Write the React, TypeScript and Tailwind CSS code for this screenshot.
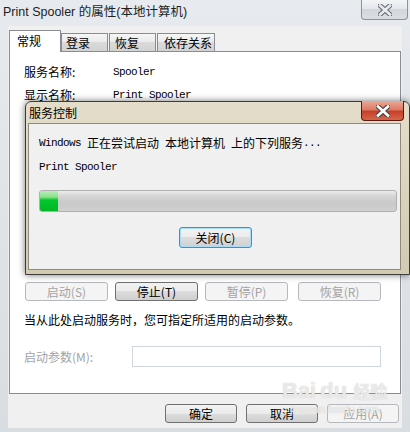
import React from "react";

const MONO = "font-['Liberation_Mono',monospace] text-[11px] tracking-[-0.6px]";

function M({ children }: { children: React.ReactNode }) {
  return <span className={MONO}>{children}</span>;
}

function CloseX({ fill, outline }: { fill: string; outline: string }) {
  return (
    <svg width="14" height="12" viewBox="0 0 14 12">
      <path d="M2 1.5 L12 10.5 M12 1.5 L2 10.5" stroke={outline} strokeWidth="5" strokeLinecap="square" fill="none" />
      <path d="M2 1.5 L12 10.5 M12 1.5 L2 10.5" stroke={fill} strokeWidth="2.6" strokeLinecap="square" fill="none" />
    </svg>
  );
}

function Btn({
  children,
  disabled,
  className = "",
}: {
  children: React.ReactNode;
  disabled?: boolean;
  className?: string;
}) {
  return (
    <div
      className={
        "flex items-center justify-center rounded-[3px] border text-[12px] leading-none " +
        (disabled
          ? "border-[#b5b9bd] bg-[#f4f4f4] text-[#a3a3a3] "
          : "border-[#707070] bg-[linear-gradient(#f2f2f2,#ebebeb_50%,#dddddd_50%,#cfcfcf)] text-black ") +
        className
      }
    >
      {children}
    </div>
  );
}

export default function App() {
  return (
    <div className="relative w-[410px] h-[432px] overflow-hidden bg-gradient-to-b from-[#e7eaee] to-[#d8dde2] font-['Noto_Sans_CJK_SC',sans-serif] text-[12px] text-black">
      {/* outer title bar */}
      <div className="flex h-[26px] items-start">
        <div className="pl-[3px] pt-[3px] text-[12.5px] leading-[18px] font-['Liberation_Sans','Noto_Sans_CJK_SC',sans-serif] text-[#1e1e1e]">
          Print Spooler 的属性(本地计算机)
        </div>
        <div className="ml-auto mr-[2px] flex h-[20px] w-[47px] items-center justify-center rounded-b-[4px] border border-t-0 border-[#8d939a] bg-[linear-gradient(#f3f5f7,#e2e6ea_50%,#d2d7dc_50%,#d9dee3)]">
          <CloseX fill="#e9ebee" outline="#6f757c" />
        </div>
      </div>

      {/* client area */}
      <div className="ml-[8px] mr-[8px] h-[402px] bg-[#f0f0f0]">
        {/* tabs */}
        <div className="flex h-[25px] items-end pl-[1px]">
          <div className="relative z-10 -mb-[1px] flex h-[22px] w-[52px] items-start border border-b-0 border-[#898c95] bg-white pl-[7px] pt-[1px] text-[12px] leading-[18px]">
            常规
          </div>
          <div className="flex h-[18px] w-[47px] items-center border border-b-0 border-[#898c95] bg-[linear-gradient(#f6f6f6,#e9e9e9_50%,#dadada_50%,#d2d2d2)] pl-[4px] text-[12px]">
            登录
          </div>
          <div className="ml-[1px] flex h-[18px] w-[47px] items-center border border-b-0 border-[#898c95] bg-[linear-gradient(#f6f6f6,#e9e9e9_50%,#dadada_50%,#d2d2d2)] pl-[5px] text-[12px]">
            恢复
          </div>
          <div className="ml-[1px] flex h-[18px] w-[58px] items-center border border-b-0 border-[#898c95] bg-[linear-gradient(#f6f6f6,#e9e9e9_50%,#dadada_50%,#d2d2d2)] pl-[6px] text-[12px]">
            依存关系
          </div>
        </div>

        {/* panel */}
        <div className="ml-[1px] flex h-[343px] w-[392px] flex-col border border-[#898c95] bg-white pl-[14px] pt-[12px]">
          <div className="flex h-[16px] items-center">
            <span className="w-[89px]">服务名称:</span>
            <M>Spooler</M>
          </div>
          <div className="mt-[7px] flex h-[16px] items-center">
            <span className="w-[89px]">显示名称:</span>
            <M>Print Spooler</M>
          </div>

          {/* area hidden under the service control dialog */}
          <div className="h-[179px]" />

          <div className="flex h-[19px] pl-[1px]">
            <Btn disabled className="w-[83px]">启动(S)</Btn>
            <Btn className="ml-[7px] w-[83px]">停止(T)</Btn>
            <Btn disabled className="ml-[7px] w-[83px]">暂停(P)</Btn>
            <Btn disabled className="ml-[10px] w-[83px]">恢复(R)</Btn>
          </div>

          <div className="mt-[11px] flex h-[16px] items-center">当从此处启动服务时，您可指定所适用的启动参数。</div>

          <div className="mt-[18px] flex h-[21px] items-center">
            <span className="w-[108px] text-[#a3a3a3]">启动参数(M):</span>
            <div className="h-[21px] w-[249px] border border-[#cfd6e0] bg-white" />
          </div>
        </div>

        {/* bottom buttons */}
        <div className="mt-[10px] flex h-[19px] pl-[157px]">
          <Btn className="w-[72px]">确定</Btn>
          <Btn className="ml-[9px] w-[72px]">取消</Btn>
          <Btn disabled className="ml-[9px] w-[72px]">应用(A)</Btn>
        </div>
      </div>

      {/* service control dialog (overlay) */}
      <div className="absolute left-[25px] top-[101px] flex h-[174px] w-[385px] flex-col rounded-t-[6px] border border-[#3c3c3c] bg-gradient-to-b from-[#e4ddc9] to-[#d2cbb2] shadow-[0_0_7px_rgba(0,0,0,0.55)]">
        <div className="flex h-[21px] items-center pl-[3px] text-[12px] leading-none text-black">服务控制</div>
        <div className="absolute right-[5px] top-[-1px] flex h-[20px] w-[43px] items-center justify-center rounded-b-[4px] border border-t-0 border-[#5b1a10] bg-[linear-gradient(#eba898,#dc7b66_45%,#c8402a_55%,#d4654b)]">
          <CloseX fill="#ffffff" outline="#4a4a4a" />
        </div>
        <div className="mb-[4px] ml-[2px] mr-[8px] flex flex-1 flex-col border border-[#8e8a7c] bg-[#f0f0f0] pl-[10px]">
          <div className="mt-[11px] flex h-[16px] items-center">
            <M>Windows</M>
            <span className="ml-[6px]">正在尝试启动</span>
            <span className="ml-[6px]">本地计算机</span>
            <span className="ml-[6px]">上的下列服务</span>
            <M>...</M>
          </div>
          <div className="mt-[8px] flex h-[16px] items-center">
            <M>Print Spooler</M>
          </div>
          <div className="mt-[15px] h-[22px] w-[358px] overflow-hidden rounded-[3px] border border-[#b0b0b0] bg-[linear-gradient(#ececec,#d6d6d6_25%,#c9c9c9_60%,#d0d0d0)]">
            <div className="h-full w-[18px] bg-[linear-gradient(#b2f0b2,#8ee08e_30%,#00c82c_45%,#00b728)]" />
          </div>
          <div className="mt-[15px] flex justify-center pr-[8px]">
            <div className="flex h-[21px] w-[73px] items-center justify-center rounded-[3px] border border-[#3094dc] bg-[linear-gradient(#f3f3f3,#ebebeb_50%,#dddddd_50%,#d0d0d0)] text-[12px] leading-none shadow-[inset_0_0_0_1px_#a6ddf8]">
              关闭(C)
            </div>
          </div>
        </div>
      </div>

      {/* watermark */}
      <div className="pointer-events-none absolute left-[282px] top-[380px] flex flex-col items-center leading-none text-white/70 [text-shadow:0_0_1px_#b8b8b8]">
        <span className="font-['Liberation_Sans',sans-serif] text-[22px] font-bold">Bai<span className="ml-[4px]">du</span> <span className="text-[17px] font-['Noto_Sans_CJK_SC',sans-serif]">经验</span></span>
        <span className="mt-[2px] font-['Liberation_Sans',sans-serif] text-[11px]">jingyan.baidu.com</span>
      </div>
    </div>
  );
}
